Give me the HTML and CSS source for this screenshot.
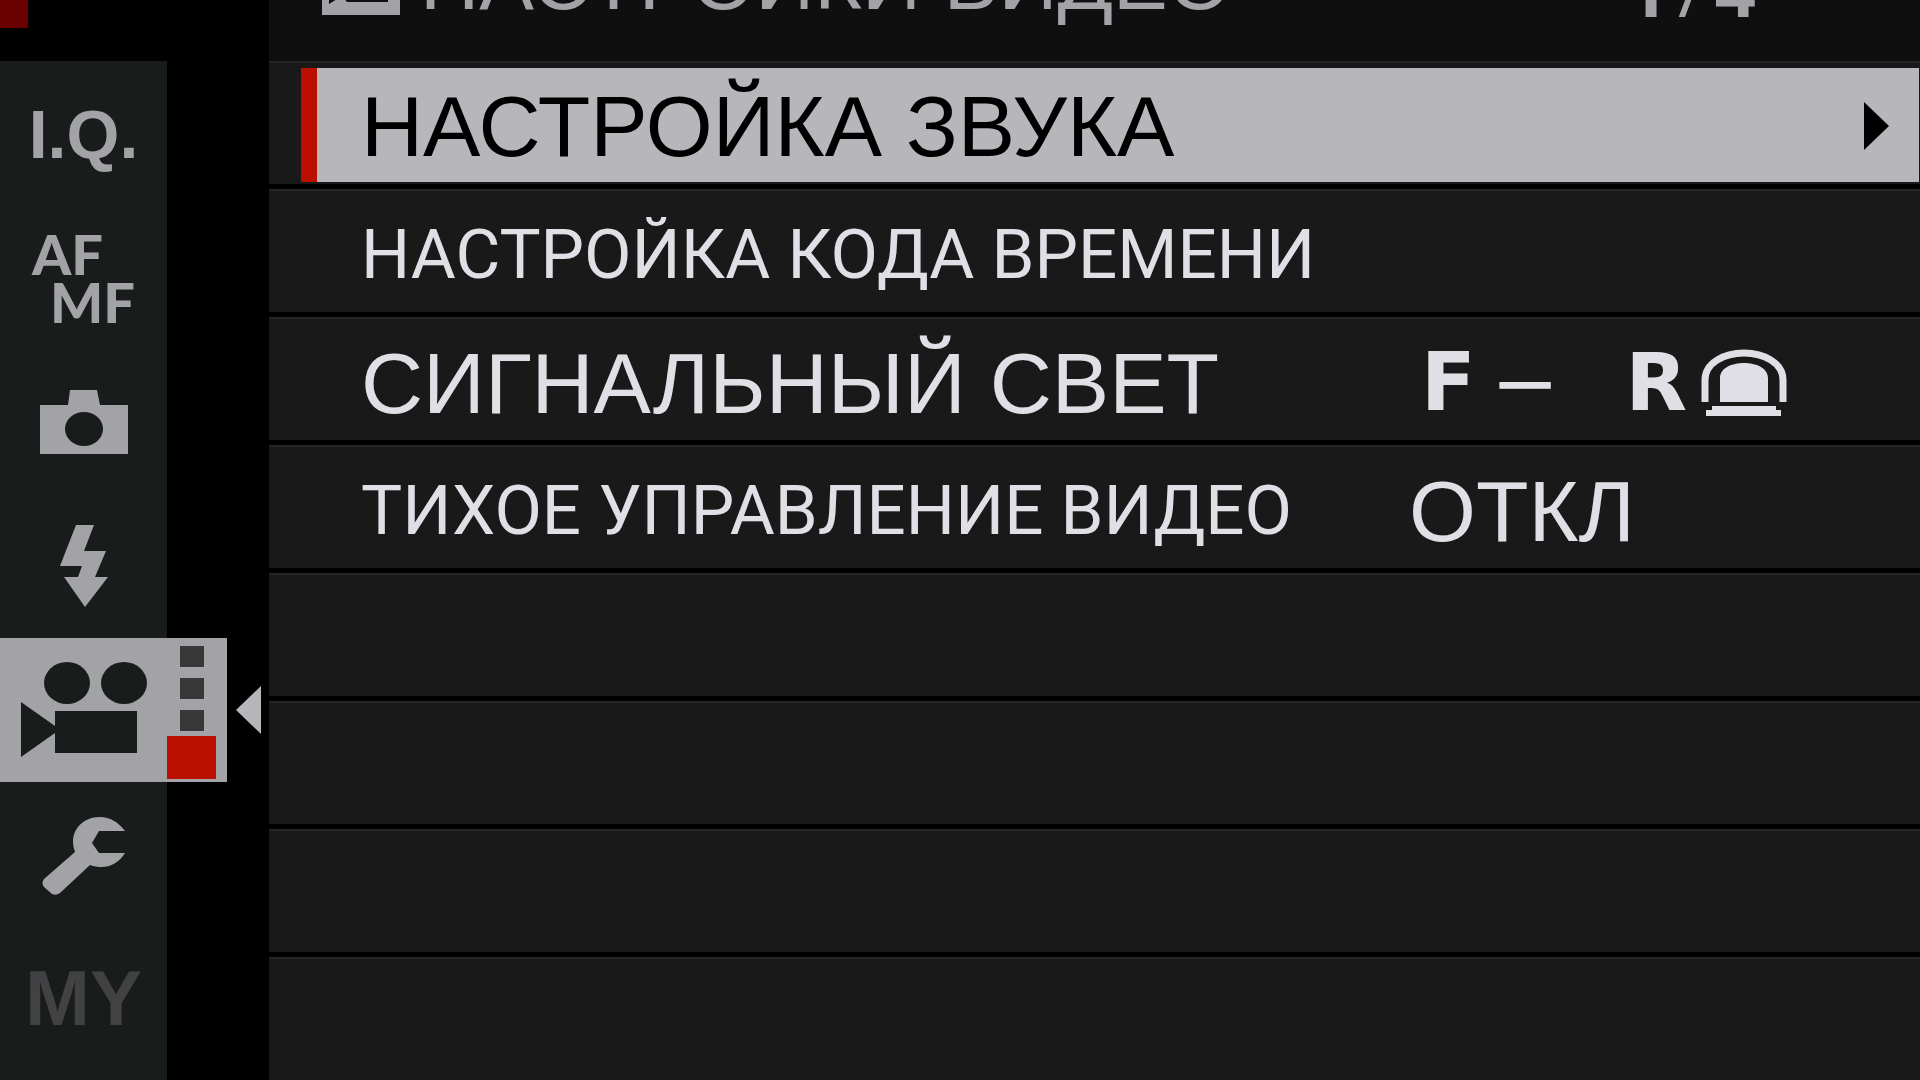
FILE: index.html
```
<!DOCTYPE html>
<html lang="ru">
<head>
    <title>Настройки видео</title>
    <meta charset="utf-8">
    <link rel="stylesheet" href="styles.css">
</head>
<body>
<div class="screen">
    <div class="side">
        <div class="top"><span class="mark"></span></div>
        <nav class="tabs">
            <button class="tab iq">I.Q.</button>
            <button class="tab focus-mode"><span>AF</span><span class="mf">MF</span></button>
            <button class="tab" aria-label="Съемка">
                <svg width="88" height="64" viewBox="0 0 88 64">
                    <path fill="currentColor" fill-rule="evenodd" d="M0 15H28L30 0H57L60 15H88V64H0ZM44 22A19 17 0 1 0 44 56A19 17 0 1 0 44 22Z"/>
                </svg>
            </button>
            <button class="tab" aria-label="Вспышка">
                <svg width="48" height="82" viewBox="0 0 48 82">
                    <path fill="currentColor" d="M16 0H34L24 26H46L35 52H48L25 82L4 52H18L22 41H0Z"/>
                </svg>
            </button>
            <button class="tab active" aria-label="Видео">
                <span class="tab-icon">
                    <svg width="126" height="96" viewBox="0 0 126 96">
                        <g fill="currentColor">
                            <ellipse cx="46" cy="21" rx="23" ry="21"/>
                            <ellipse cx="103" cy="21" rx="23" ry="21"/>
                            <path d="M0 40L34 64V49H116V91H34V71L0 95Z"/>
                        </g>
                    </svg>
                </span>
                <span class="pages">
                    <i></i>
                    <i></i>
                    <i></i>
                    <i class="current"></i>
                </span>
                <svg class="back" width="25" height="48" viewBox="0 0 25 48">
                    <path fill="currentColor" d="M25 0V48L0 24Z"/>
                </svg>
            </button>
            <button class="tab" aria-label="Установка">
                <svg width="84" height="82" viewBox="0 -4 84 82">
                    <path fill="currentColor" d="M83 14C76 5 68 0 58 0C42 0 31 11 31 25Q31 30 33 35L2 62Q-1 66 2 70L10 77Q14 79 18 76L48 48C62 53 75 49 83 36H57L50 26L57 14Z"/>
                </svg>
            </button>
            <button class="tab my">MY</button>
        </nav>
    </div>
    <main class="panel">
        <header class="header">
            <svg width="78" height="62" viewBox="0 0 78 62">
                <path fill="currentColor" fill-rule="evenodd" d="M0 0H78V62H0ZM7 8V51L20 43L25 49H66V8Z"/>
            </svg>
            <h1 class="title">НАСТРОЙКИ ВИДЕО</h1>
            <span class="count">1<span class="slash">/</span>4</span>
        </header>
        <ul class="list">
            <li class="selected">
                <button class="row">
                    <span>НАСТРОЙКА ЗВУКА</span>
                    <svg class="more" width="25" height="48" viewBox="0 0 25 48">
                        <path fill="currentColor" d="M0 0V48L25 24Z"/>
                    </svg>
                </button>
            </li>
            <li><button class="row"><span class="narrow">НАСТРОЙКА КОДА ВРЕМЕНИ</span></button></li>
            <li>
                <button class="row">
                    <span>СИГНАЛЬНЫЙ СВЕТ</span>
                    <span class="value lamps">
                        <b>F</b>
                        <span class="off">−</span>
                        <b>R</b>
                        <svg width="86" height="68" viewBox="0 0 86 68">
                            <path fill="none" stroke="currentColor" stroke-width="7" d="M4 53V31C4 14 23 4 43 4S82 14 82 31V53"/>
                            <path fill="currentColor" d="M19 53V29C19 19 31 14 43 14S67 19 67 29V53ZM11 57H75V61H80V67H5V61H11Z"/>
                        </svg>
                    </span>
                </button>
            </li>
            <li>
                <button class="row">
                    <span class="narrow">ТИХОЕ УПРАВЛЕНИЕ ВИДЕО</span>
                    <span class="value">ОТКЛ</span>
                </button>
            </li>
            <li></li>
            <li></li>
            <li></li>
            <li></li>
        </ul>
    </main>
</div>
</body>
</html>
```
FILE: styles.css
```
* {
    margin: 0;
    padding: 0;
    box-sizing: border-box;
}

body {
    background: #000;
    color: #e0dfe5;
    font-family: "Liberation Sans", Arial, sans-serif;
    overflow: hidden;
}

button {
    border: 0;
    background: none;
    color: inherit;
    font: inherit;
    text-align: left;
}

ul {
    list-style: none;
}

svg {
    display: block;
    flex-shrink: 0;
}

.screen {
    display: flex;
    height: 100vh;
    overflow: hidden;
}

/* left tabs */
.side {
    display: flex;
    flex-direction: column;
    flex-shrink: 0;
    width: 269px;
    color: #a3a2a7;
}

.top {
    flex-shrink: 0;
    height: 61px;
}

.mark {
    display: block;
    width: 28px;
    height: 28px;
    background: #6b0000;
}

.tabs {
    flex: 1;
    width: 167px;
    padding-top: 1px;
    background: #181d1b;
}

.tab {
    display: flex;
    align-items: center;
    justify-content: center;
    width: 100%;
    height: 144px;
}

.iq {
    font-size: 68px;
    font-weight: bold;
}

.focus-mode {
    flex-direction: column;
    align-items: flex-start;
    padding-left: 32px;
    font: 900 56px/48px Lato, sans-serif;
}

.mf {
    padding-left: 18px;
}

.my {
    color: #424144;
    font-size: 78px;
    font-weight: bold;
}

.active {
    justify-content: flex-start;
    width: 261px;
    background: linear-gradient(#a3a2a7, #a3a2a7) no-repeat 0 0 / 227px 100%;
}

.tab-icon {
    display: flex;
    justify-content: center;
    width: 167px;
    color: #181d1b;
}

.pages {
    display: flex;
    flex-direction: column;
    align-items: center;
    gap: 11px;
    width: 49px;
    height: 100%;
    padding-top: 8px;
}

.pages i {
    width: 24px;
    height: 21px;
    background: #383838;
}

.pages .current {
    width: 49px;
    height: 43px;
    margin-top: -6px;
    background: #bb1000;
}

.back {
    margin-left: auto;
    color: #b7b6bb;
}

/* menu */
.panel {
    flex: 1;
    min-width: 0;
    background: #191919;
}

.header {
    display: flex;
    align-items: flex-end;
    height: 61px;
    padding: 0 164px 46px 53px;
    background: #0f0f0f;
    color: #a3a2a7;
}

.title {
    margin: 0 auto -6px 20px;
    font-size: 82px;
    font-weight: normal;
    line-height: 80px;
    white-space: nowrap;
}

.count {
    margin-bottom: -14px;
    font: bold 72px/80px "Noto Sans", sans-serif;
}

.slash {
    padding: 0 10px;
    font-weight: normal;
}

.list li {
    height: 128px;
    border-top: 2px solid #242424;
    border-bottom: 5px solid #000;
}

.row {
    display: grid;
    grid-template-columns: 1fr 511px;
    align-items: center;
    width: 100%;
    height: 100%;
    padding: 7px 0 0 92px;
    font-size: 86px;
    line-height: 96px;
    white-space: nowrap;
}

.selected {
    padding: 5px 1px 2px 32px;
}

.selected .row {
    padding: 2px 30px 0 44px;
    grid-template-columns: 1fr auto;
    border-left: 16px solid #bb1000;
    background: #b7b6bb;
    color: #000;
}

/* long labels */
.narrow {
    font-family: Roboto, sans-serif;
    font-size: 69px;
}

.lamps {
    display: flex;
    align-items: center;
    padding-left: 12px;
}

.lamps b {
    font: bold 80px/96px "DejaVu Sans", sans-serif;
}

.off {
    margin: 0 66px 0 15px;
    font: 82px/96px "DejaVu Sans", sans-serif;
}

.lamps svg {
    margin-left: 14px;
}
```
